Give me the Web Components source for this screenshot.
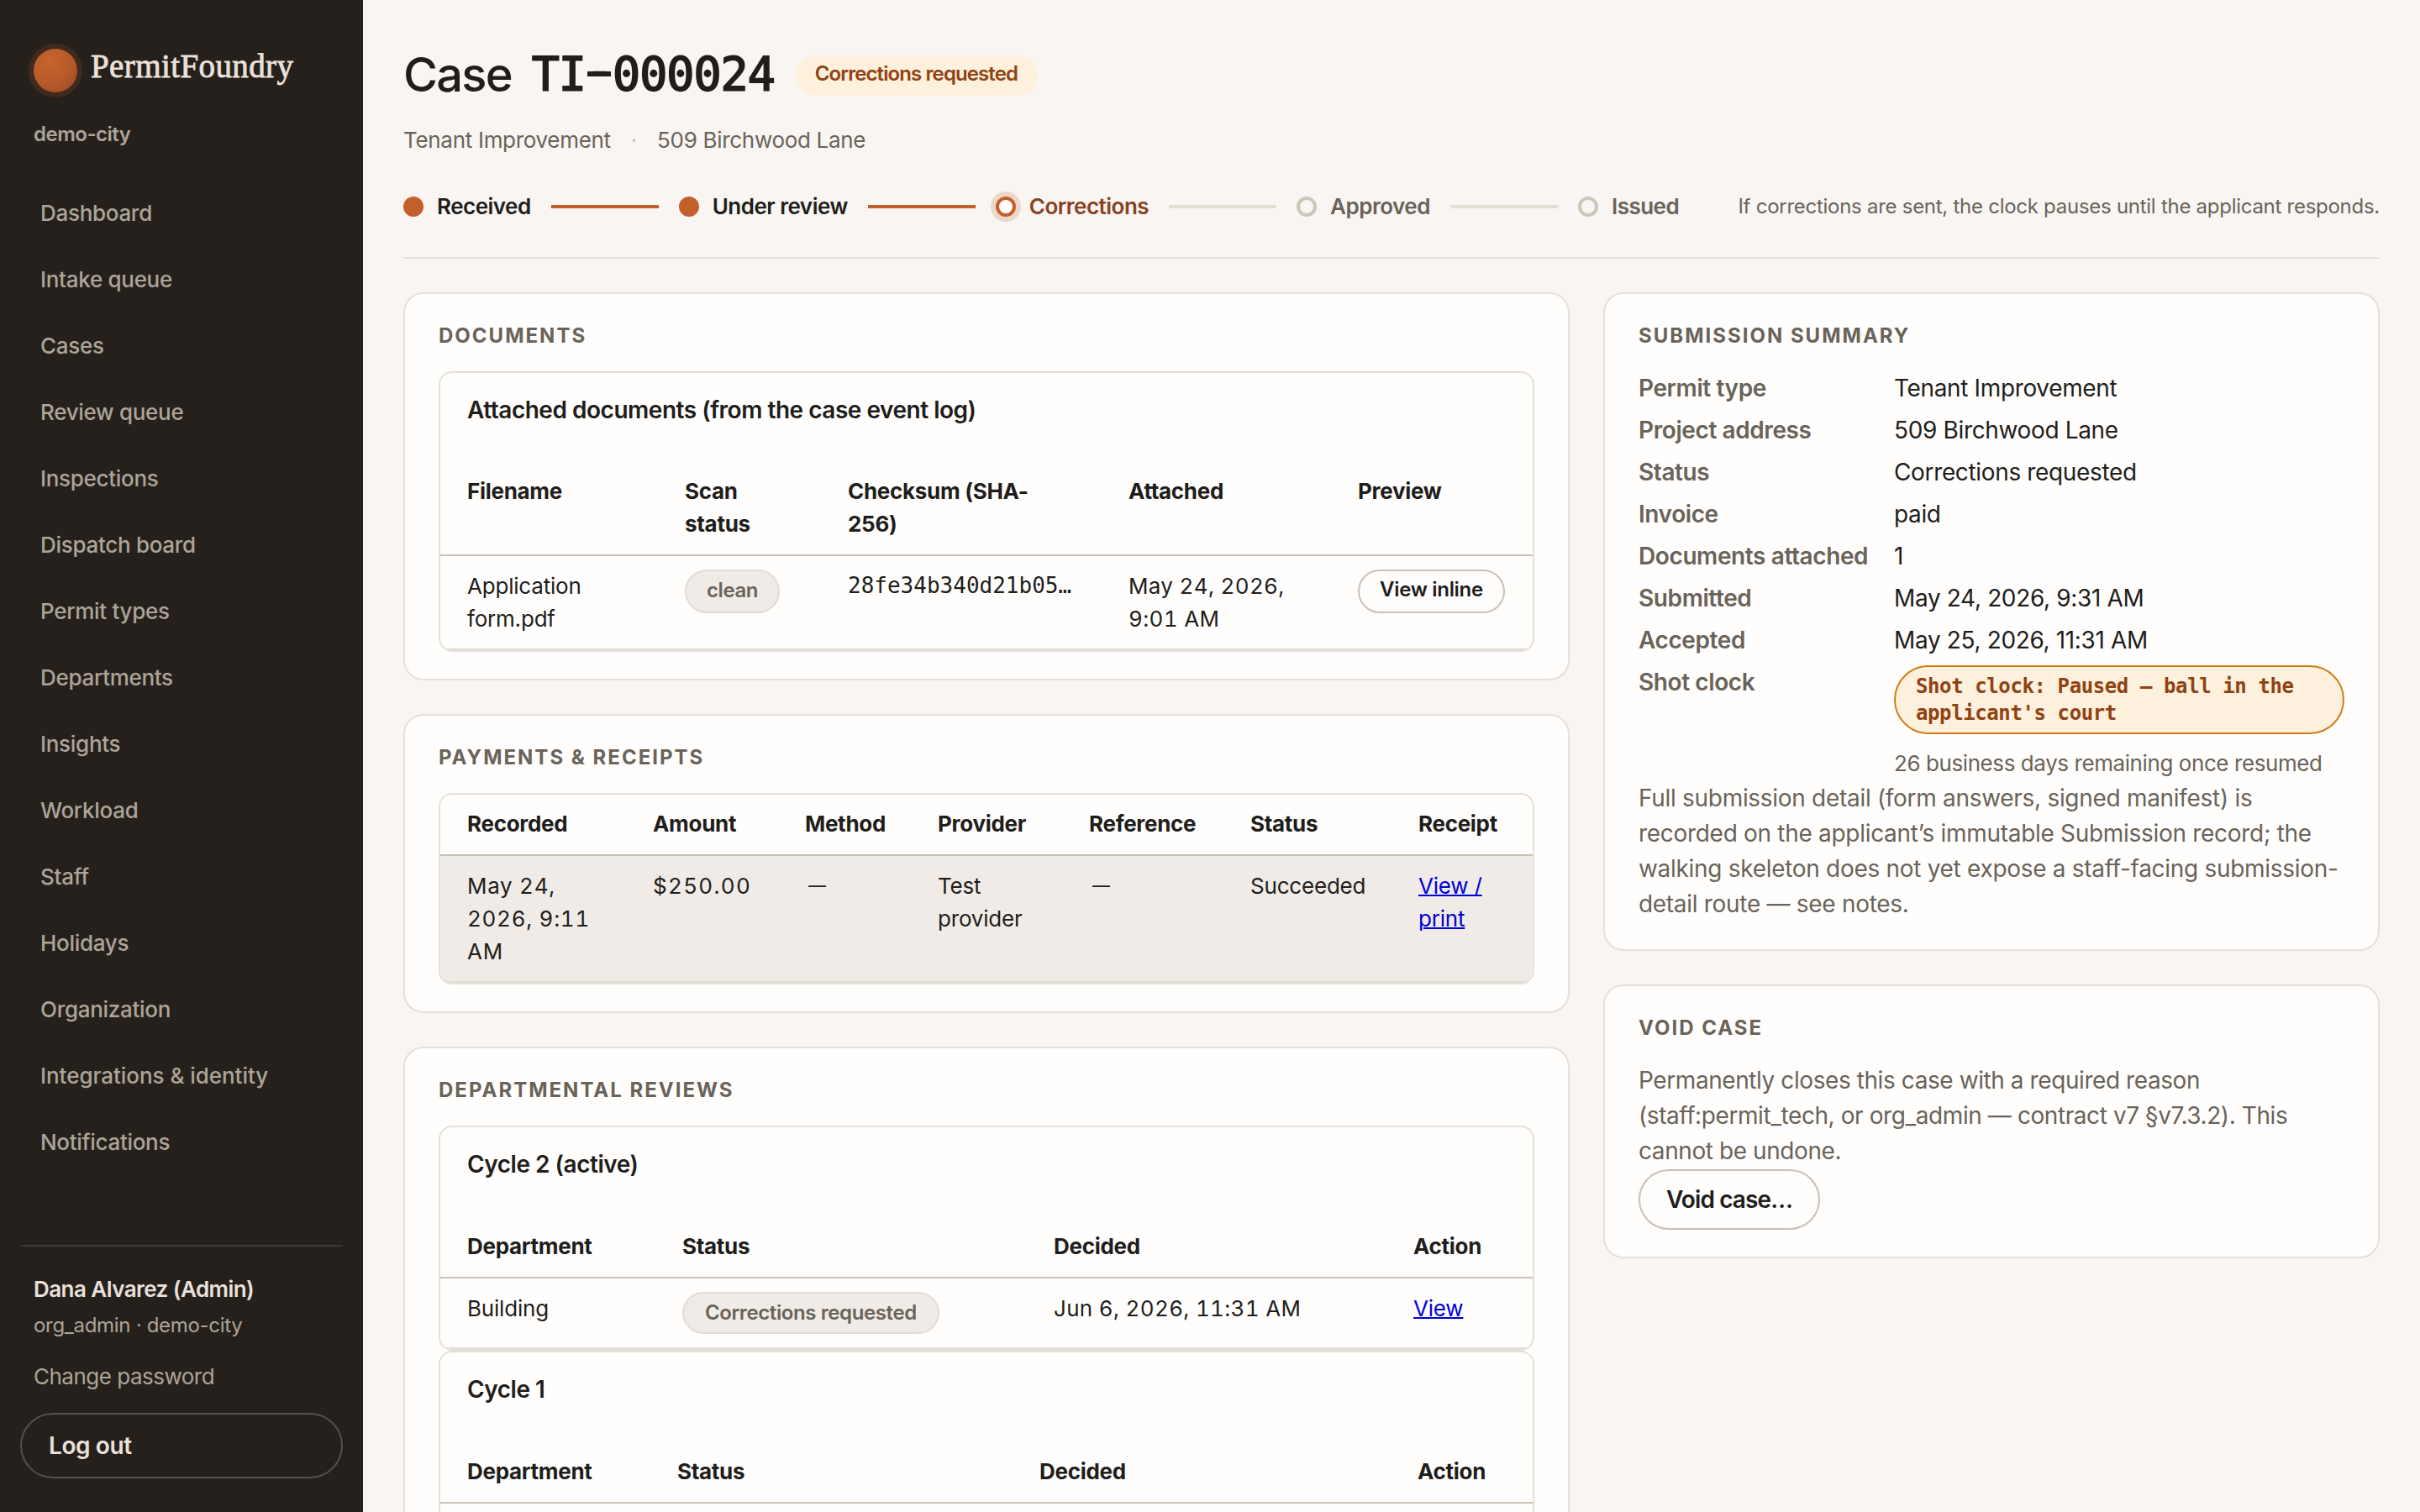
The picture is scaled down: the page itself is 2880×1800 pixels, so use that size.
<!DOCTYPE html>
<html lang="en">
<head>
<meta charset="utf-8">
<title>Case TI-000024 - PermitFoundry</title>
<style>
    :root {
        --font-ui: Inter, "Liberation Sans", sans-serif;
        --font-mono: "DejaVu Sans Mono", "Liberation Mono", monospace;
        --font-brand: "Liberation Serif", serif;
        --color-ink: #211d1b;
        --color-muted: #69635a;
        --color-page: #f8f5f2;
        --color-card: #fffefd;
        --color-line: #e4e0da;
        --color-line-strong: #c6c2b6;
        --color-sunken: #f0ebe6;
        --color-accent: #c2602b;
        --color-accent-dark: #8a4022;
        --color-warn: #8f4213;
        --color-warn-bg: #fdf0dc;
    }
    body {
        margin: 0;
        height: 1800px;
        overflow: hidden;
        background: var(--color-page);
        color: var(--color-ink);
        font-family: var(--font-ui);
        font-size: 28px;
        line-height: 42px;
        letter-spacing: -0.3px;
    }
    a { color: #0000d6; text-decoration-thickness: 2px; }
</style>
</head>
<body>
<app-shell>
    <side-bar slot="nav" org="demo-city" user="Dana Alvarez (Admin)" role-line="org_admin · demo-city">
        <nav-item>Dashboard</nav-item>
        <nav-item>Intake queue</nav-item>
        <nav-item>Cases</nav-item>
        <nav-item>Review queue</nav-item>
        <nav-item>Inspections</nav-item>
        <nav-item>Dispatch board</nav-item>
        <nav-item>Permit types</nav-item>
        <nav-item>Departments</nav-item>
        <nav-item>Insights</nav-item>
        <nav-item>Workload</nav-item>
        <nav-item>Staff</nav-item>
        <nav-item>Holidays</nav-item>
        <nav-item>Organization</nav-item>
        <nav-item wide>Integrations &amp; identity</nav-item>
        <nav-item>Notifications</nav-item>
    </side-bar>

    <case-header number="TI-000024" status="Corrections requested" type="Tenant Improvement" address="509 Birchwood Lane">
        <case-step state="done">Received</case-step>
        <case-step state="done" line="done">Under review</case-step>
        <case-step state="current" line="done">Corrections</case-step>
        <case-step line="todo">Approved</case-step>
        <case-step line="todo">Issued</case-step>
        <span slot="hint">If corrections are sent, the clock pauses until the applicant responds.</span>
    </case-header>

    <section-card slot="left" heading="Documents">
        <data-table caption="Attached documents (from the case event log)" cols="259px 194px 334px 273px 1fr">
            <table-row head>
                <span>Filename</span><span>Scan status</span><span>Checksum (SHA-<br>256)</span><span>Attached</span><span>Preview</span>
            </table-row>
            <table-row>
                <span>Application form.pdf</span>
                <span><status-pill tall>clean</status-pill></span>
                <span class="mono">28fe34b340d21b05…</span>
                <span class="num">May 24, 2026,<br>9:01 AM</span>
                <span><pill-button small>View inline</pill-button></span>
            </table-row>
        </data-table>
    </section-card>

    <section-card slot="left" heading="Payments &amp; receipts">
        <data-table cols="221px 181px 158px 180px 192px 200px 1fr">
            <table-row head>
                <span>Recorded</span><span>Amount</span><span>Method</span><span>Provider</span><span>Reference</span><span>Status</span><span>Receipt</span>
            </table-row>
            <table-row shaded>
                <span class="num">May 24,<br>2026, 9:11<br>AM</span>
                <span class="num amount">$250.00</span>
                <span class="dash">—</span>
                <span>Test<br>provider</span>
                <span class="dash">—</span>
                <span>Succeeded</span>
                <span><a href="#">View /<br>print</a></span>
            </table-row>
        </data-table>
    </section-card>

    <section-card slot="left" heading="Departmental reviews">
        <data-table roomy caption="Cycle 2 (active)" cols="256px 442px 428px 1fr">
            <table-row head>
                <span>Department</span><span>Status</span><span>Decided</span><span>Action</span>
            </table-row>
            <table-row>
                <span>Building</span>
                <span><status-pill>Corrections requested</status-pill></span>
                <span class="num">Jun 6, 2026, 11:31 AM</span>
                <span><a href="#">View</a></span>
            </table-row>
        </data-table>
        <data-table roomy caption="Cycle 1" cols="250px 431px 450px 1fr">
            <table-row head>
                <span>Department</span><span>Status</span><span>Decided</span><span>Action</span>
            </table-row>
            <table-row><span></span></table-row>
        </data-table>
    </section-card>

    <section-card slot="right" heading="Submission summary">
        <summary-list>
            <summary-item label="Permit type">Tenant Improvement</summary-item>
            <summary-item label="Project address">509 Birchwood Lane</summary-item>
            <summary-item label="Status">Corrections requested</summary-item>
            <summary-item label="Invoice">paid</summary-item>
            <summary-item label="Documents attached">1</summary-item>
            <summary-item label="Submitted">May 24, 2026, 9:31 AM</summary-item>
            <summary-item label="Accepted">May 25, 2026, 11:31 AM</summary-item>
            <summary-item label="Shot clock"><shot-clock note="26 business days remaining once resumed">Shot clock: Paused — ball in the applicant's court</shot-clock></summary-item>
        </summary-list>
        <muted-text>Full submission detail (form answers, signed manifest) is recorded on the applicant’s immutable Submission record; the walking skeleton does not yet expose a staff-facing submission-detail route — see notes.</muted-text>
    </section-card>

    <section-card slot="right" heading="Void case">
        <muted-text snug>Permanently closes this case with a required reason (staff:permit_tech, or org_admin — contract v7 §v7.3.2). This cannot be undone.</muted-text>
        <pill-button>Void case…</pill-button>
    </section-card>
</app-shell>

<script>
// shared base: attaches an open root and fills it from render()
class BaseElement extends HTMLElement {
    constructor() {
        super();
        this.attachShadow({ mode: 'open' });
    }

    connectedCallback() {
        this.shadowRoot.innerHTML = this.render();
    }

    attr(name) {
        return this.getAttribute(name) || '';
    }
}

class AppShell extends BaseElement {
    render() {
        return `
            <style>
                :host {
                    display: flex;
                    height: 1800px;
                    overflow: hidden;
                }
                main {
                    flex: 1;
                    min-width: 0;
                    padding: 48px 48px 0;
                }
                .columns {
                    display: grid;
                    grid-template-columns: 1388px 1fr;
                    gap: 40px;
                    align-items: start;
                    margin-top: 40px;
                }
                .column {
                    display: flex;
                    flex-direction: column;
                    gap: 40px;
                    min-width: 0;
                }
            </style>
            <slot name="nav"></slot>
            <main>
                <slot></slot>
                <div class="columns">
                    <div class="column"><slot name="left"></slot></div>
                    <div class="column"><slot name="right"></slot></div>
                </div>
            </main>
        `;
    }
}

class SideBar extends BaseElement {
    render() {
        return `
            <style>
                :host {
                    display: flex;
                    flex-direction: column;
                    box-sizing: border-box;
                    flex: 0 0 432px;
                    padding: 58px 24px 40px;
                    background: #26201d;
                    color: #aca598;
                }
                .brand {
                    display: flex;
                    align-items: center;
                    gap: 16px;
                    height: 52px;
                    padding-left: 16px;
                }
                .mark {
                    width: 52px;
                    height: 52px;
                    border-radius: 50%;
                    background: radial-gradient(circle at 35% 30%, #c7642e, #b95a2a 50%, #98481f);
                    box-shadow: 0 0 0 6px rgba(194, 96, 43, 0.17);
                }
                .name {
                    color: #eae1da;
                    font: 39px/44px var(--font-brand);
                    letter-spacing: 0.4px;
                    -webkit-text-stroke: 0.8px #eae1da;
                    padding-bottom: 11px;
                }
                .org {
                    padding: 32px 16px 0;
                    font-size: 24px;
                    line-height: 36px;
                    font-weight: 600;
                    letter-spacing: -0.5px;
                }
                nav {
                    padding: 35.5px 24px 0;
                }
                footer {
                    margin-top: auto;
                    border-top: 2px solid #3e3835;
                    padding-top: 31px;
                    line-height: 39px;
                    font-size: 26px;
                }
                footer div {
                    padding: 0 16px;
                }
                .user {
                    color: #eae1da;
                    font-weight: 600;
                    letter-spacing: -0.55px;
                }
                .role {
                    margin-top: 2px;
                    font-size: 24px;
                    line-height: 44px;
                }
                .password {
                    margin: 19px 0 24px;
                    letter-spacing: -0.5px;
                }
                button {
                    display: block;
                    width: 100%;
                    height: 78px;
                    padding: 0 32px 1px;
                    border: 2px solid #57514c;
                    border-radius: 39px;
                    background: none;
                    color: #eae1da;
                    font: 600 28px/42px var(--font-ui);
                    letter-spacing: -0.4px;
                    text-align: left;
                }
            </style>
            <div class="brand"><span class="mark"></span><span class="name">PermitFoundry</span></div>
            <div class="org">${this.attr('org')}</div>
            <nav><slot></slot></nav>
            <footer>
                <div class="user">${this.attr('user')}</div>
                <div class="role">${this.attr('role-line')}</div>
                <div class="password">Change password</div>
                <button>Log out</button>
            </footer>
        `;
    }
}

class NavItem extends BaseElement {
    render() {
        return `
            <style>
                :host {
                    display: block;
                    height: 79px;
                    line-height: 79px;
                    font-size: 26px;
                    font-weight: 500;
                }
                :host([wide]) {
                    letter-spacing: -0.05px;
                }
            </style>
            <slot></slot>
        `;
    }
}

class CaseHeader extends BaseElement {
    render() {
        const [prefix, serial] = this.attr('number').split('-');
        return `
            <style>
                :host {
                    display: block;
                    height: 258px;
                    border-bottom: 2px solid var(--color-line);
                }
                .title {
                    display: flex;
                    align-items: center;
                    height: 82px;
                }
                h1 {
                    display: flex;
                    gap: 24px;
                    margin: 0;
                    font-size: 56px;
                    line-height: 84px;
                    font-weight: 500;
                    letter-spacing: -1.8px;
                }
                h1 .number {
                    font: 55px/82px var(--font-mono);
                    letter-spacing: -1px;
                    -webkit-text-stroke: 1.8px var(--color-ink);
                }
                /* the mono hyphen is short and low next to the capitals: lift it and draw it cell-wide */
                h1 .hyphen {
                    display: inline-block;
                    transform: translateY(-4px);
                    background: linear-gradient(var(--color-ink), var(--color-ink)) 2px 42px / 28px 6px no-repeat;
                }
                .status {
                    height: 48px;
                    margin: 2px 0 0 25px;
                    padding: 0 24px 0 23px;
                    border-radius: 24px;
                    background: var(--color-warn-bg);
                    color: var(--color-warn);
                    font-size: 24px;
                    line-height: 44px;
                    font-weight: 600;
                    letter-spacing: -0.9px;
                }
                .meta {
                    display: flex;
                    gap: 24px;
                    height: 39px;
                    margin-top: 17px;
                    font-size: 26px;
                    line-height: 39px;
                    color: var(--color-muted);
                }
                .meta i {
                    color: var(--color-line-strong);
                    font-style: normal;
                }
                .steps {
                    display: flex;
                    align-items: center;
                    height: 40px;
                    margin-top: 40px;
                }
                .hint {
                    margin-left: auto;
                    font-size: 24px;
                    letter-spacing: -0.27px;
                    color: var(--color-muted);
                    white-space: nowrap;
                }
            </style>
            <div class="title">
                <h1><span>Case</span><span class="number">${prefix}<span class="hyphen">-</span>${serial}</span></h1>
                <span class="status">${this.attr('status')}</span>
            </div>
            <div class="meta"><span>${this.attr('type')}</span><i>·</i><span>${this.attr('address')}</span></div>
            <div class="steps">
                <slot></slot>
                <span class="hint"><slot name="hint"></slot></span>
            </div>
        `;
    }
}

class CaseStep extends BaseElement {
    render() {
        const line = this.hasAttribute('line') ? '<span class="line"></span>' : '';
        return `
            <style>
                :host {
                    display: flex;
                    align-items: center;
                    font-size: 26px;
                    line-height: 40px;
                    font-weight: 600;
                    letter-spacing: -0.5px;
                    color: var(--color-muted);
                    white-space: nowrap;
                }
                .line {
                    width: 128px;
                    height: 4px;
                    margin: 0 24px;
                    background: #e2ded2;
                }
                :host([line="done"]) .line {
                    background: var(--color-accent);
                }
                .dot {
                    box-sizing: border-box;
                    width: 24px;
                    height: 24px;
                    margin-right: 16px;
                    border: 4px solid #cbc6b9;
                    border-radius: 50%;
                }
                :host([state="done"]) {
                    color: var(--color-ink);
                }
                :host([state="done"]) .dot {
                    background: var(--color-accent);
                    border-color: var(--color-accent);
                }
                :host([state="current"]) {
                    color: var(--color-accent-dark);
                }
                :host([state="current"]) .dot {
                    background: var(--color-card);
                    border-color: var(--color-accent);
                    box-shadow: 0 0 0 6px rgba(194, 96, 43, 0.2);
                }
            </style>
            ${line}<span class="dot"></span><slot></slot>
        `;
    }
}

class SectionCard extends BaseElement {
    render() {
        return `
            <style>
                :host {
                    display: block;
                    padding: 32px 40px;
                    border: 2px solid var(--color-line);
                    border-radius: 24px;
                    background: var(--color-card);
                }
                h2 {
                    margin: 0 0 24px;
                    font-size: 24px;
                    line-height: 36px;
                    font-weight: 700;
                    letter-spacing: 2px;
                    text-transform: uppercase;
                    color: var(--color-muted);
                }
            </style>
            <h2>${this.attr('heading')}</h2>
            <slot></slot>
        `;
    }
}

class DataTable extends BaseElement {
    render() {
        const caption = this.attr('caption');
        this.style.setProperty('--cols', this.attr('cols'));
        return `
            <style>
                :host {
                    display: block;
                    overflow: hidden;
                    border: 2px solid var(--color-line);
                    border-radius: 16px;
                }
                .caption {
                    padding: 23px 32px 41px;
                    line-height: 42px;
                    font-weight: 600;
                    letter-spacing: -0.48px;
                }
                :host([roomy]) .caption {
                    padding-bottom: 42px;
                }
            </style>
            ${caption ? `<div class="caption">${caption}</div>` : ''}
            <slot></slot>
        `;
    }
}

class TableRow extends BaseElement {
    render() {
        return `
            <style>
                :host {
                    display: grid;
                    grid-template-columns: var(--cols);
                    align-items: start;
                    border-bottom: 2px solid #e2ddd3;
                    font-size: 26px;
                    line-height: 39px;
                    letter-spacing: -0.2px;
                }
                :host([head]) {
                    border-bottom-color: var(--color-line-strong);
                    font-weight: 700;
                    letter-spacing: -0.3px;
                }
                :host([shaded]) {
                    background: var(--color-sunken);
                }
                ::slotted(span) {
                    padding: 16px 32px;
                }
                :host([head]) ::slotted(span) {
                    padding: 15px 32px 17px;
                }
                ::slotted(.mono) {
                    font-family: var(--font-mono);
                    font-size: 26px;
                    letter-spacing: 0;
                    white-space: nowrap;
                }
                ::slotted(.num) {
                    font-variant-numeric: tabular-nums;
                    letter-spacing: 0.32px;
                    white-space: nowrap;
                }
                :host([shaded]) ::slotted(.num) {
                    letter-spacing: 0.7px;
                }
                :host([shaded]) ::slotted(.amount) {
                    letter-spacing: 1.3px;
                }
                ::slotted(.dash) {
                    padding-left: 36px;
                    font-size: 21px;
                }
            </style>
            <slot></slot>
        `;
    }
}

class StatusPill extends BaseElement {
    render() {
        return `
            <style>
                :host {
                    display: block;
                    box-sizing: border-box;
                    width: max-content;
                    height: 50px;
                    padding: 0 25px;
                    border: 2px solid #e2ddd5;
                    border-radius: 26px;
                    background: var(--color-sunken);
                    color: var(--color-muted);
                    font-size: 24px;
                    line-height: 45px;
                    font-weight: 600;
                    letter-spacing: -0.4px;
                }
                :host([tall]) {
                    height: 52px;
                    padding: 0 24px;
                }
            </style>
            <slot></slot>
        `;
    }
}

class PillButton extends BaseElement {
    render() {
        return `
            <style>
                :host {
                    display: block;
                    box-sizing: border-box;
                    width: max-content;
                    height: 72px;
                    padding: 0 31px;
                    border: 2px solid var(--color-line-strong);
                    border-radius: 36px;
                    line-height: 68px;
                    font-weight: 600;
                    letter-spacing: -0.9px;
                }
                :host([small]) {
                    height: 52px;
                    padding: 0 24px;
                    font-size: 24px;
                    line-height: 44px;
                    letter-spacing: -0.3px;
                    white-space: nowrap;
                }
            </style>
            <slot></slot>
        `;
    }
}

class SummaryList extends BaseElement {
    render() {
        return `
            <style>
                :host {
                    display: flex;
                    flex-direction: column;
                    gap: 11px;
                    padding: 1px 0;
                }
            </style>
            <slot></slot>
        `;
    }
}

class SummaryItem extends BaseElement {
    render() {
        return `
            <style>
                :host {
                    display: grid;
                    grid-template-columns: 304px 1fr;
                    line-height: 39px;
                    letter-spacing: -0.35px;
                }
                .label {
                    font-weight: 600;
                    letter-spacing: -0.4px;
                    color: var(--color-muted);
                }
            </style>
            <span class="label">${this.attr('label')}</span>
            <span><slot></slot></span>
        `;
    }
}

class ShotClock extends BaseElement {
    render() {
        return `
            <style>
                :host {
                    display: block;
                    margin-top: -1px;
                }
                .pill {
                    padding: 7px 24px;
                    border: 2px solid #cf7c18;
                    border-radius: 41px;
                    background: var(--color-warn-bg);
                    color: var(--color-warn);
                    font: 700 24px/32px var(--font-mono);
                    letter-spacing: -0.4px;
                }
                .note {
                    margin: 15px 0 1px;
                    font-size: 26px;
                    letter-spacing: -0.42px;
                    color: var(--color-muted);
                }
            </style>
            <div class="pill"><slot></slot></div>
            <div class="note">${this.attr('note')}</div>
        `;
    }
}

class MutedText extends BaseElement {
    render() {
        return `
            <style>
                :host {
                    display: block;
                    margin: -1px 0 1px;
                    color: var(--color-muted);
                }
                :host([snug]) {
                    letter-spacing: -0.42px;
                }
            </style>
            <slot></slot>
        `;
    }
}

customElements.define('app-shell', AppShell);
customElements.define('side-bar', SideBar);
customElements.define('nav-item', NavItem);
customElements.define('case-header', CaseHeader);
customElements.define('case-step', CaseStep);
customElements.define('section-card', SectionCard);
customElements.define('data-table', DataTable);
customElements.define('table-row', TableRow);
customElements.define('status-pill', StatusPill);
customElements.define('pill-button', PillButton);
customElements.define('summary-list', SummaryList);
customElements.define('summary-item', SummaryItem);
customElements.define('shot-clock', ShotClock);
customElements.define('muted-text', MutedText);
</script>
</body>
</html>
